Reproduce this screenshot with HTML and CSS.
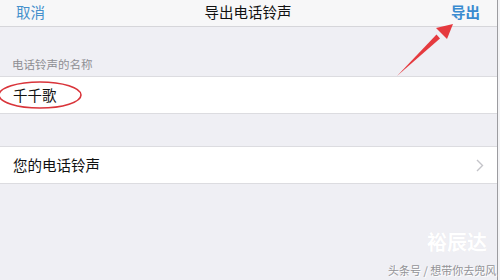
FILE: index.html
```html
<!DOCTYPE html>
<html lang="zh">
<head>
<meta charset="utf-8">
<link rel="stylesheet" href="styles.css">
</head>
<body>
<div class="app">
  <div class="nav">
    <span class="nav-btn">取消</span>
    <span class="nav-title">导出电话铃声</span>
    <span class="nav-btn nav-done">导出</span>
  </div>
  <div class="group-header">电话铃声的名称</div>
  <div class="row"><span class="row-text">千千歌</span></div>
  <div class="spacer"></div>
  <div class="row row-link">
    <span class="row-text">您的电话铃声</span>
    <svg class="chevron" width="8" height="13" viewBox="0 0 8 13"><path d="M1 1 L6.5 6.5 L1 12" fill="none" stroke="#c4c4c9" stroke-width="1.4"/></svg>
  </div>
  <svg class="annot" width="497" height="280" viewBox="0 0 497 280">
    <ellipse cx="40" cy="95" rx="41" ry="13" fill="none" stroke="#d9343a" stroke-width="1.6"/>
    <path d="M397 76 L440 38.5 L436.5 34.5 Z" fill="#e53a3f"/>
    <path d="M453 24 L436 28 L447 39 Z" fill="#e53a3f"/>
  </svg>
  <div class="wm-title">裕辰达</div>
  <div class="wm-sub">头条号 / 想带你去兜风</div>
</div>
</body>
</html>
```
FILE: styles.css
```css
* { box-sizing: border-box; margin: 0; padding: 0; }
html, body { width: 500px; height: 280px; overflow: hidden; background: #f4f4f6; }
body { font-family: "Noto Sans CJK SC", "Noto Sans", sans-serif; }
.app {
  position: relative;
  width: 498px;
  height: 280px;
  background: #efeff4;
  border-right: 1px solid #9c9ca0;
  display: flex;
  flex-direction: column;
}
.nav {
  height: 27px;
  background: #f7f7f8;
  border-bottom: 1px solid #d6d6da;
  display: grid;
  grid-template-columns: 1fr auto 1fr;
  align-items: center;
  padding: 0 17px 1px 16px;
}
.nav-btn { font-size: 14.5px; color: #4590cc; line-height: 1; }
.nav-title { font-size: 14.5px; color: #111; line-height: 1; }
.nav-done { justify-self: end; font-weight: 700; color: #3a8bd0; }
.group-header {
  height: 49px;
  display: flex;
  align-items: flex-end;
  padding: 0 0 6px 12px;
  font-size: 11.5px;
  color: #8e8e93;
  line-height: 1;
}
.row {
  height: 38px;
  background: #fff;
  border-top: 1px solid #dcdce0;
  border-bottom: 1px solid #dcdce0;
  display: flex;
  align-items: center;
  justify-content: space-between;
  padding: 0 13px 0 13px;
}
.row-text { font-size: 14.5px; color: #111; line-height: 1; }
.spacer { height: 32px; }
.chevron { margin-right: 0; }
.annot { position: absolute; left: 0; top: 0; pointer-events: none; }
.wm-title {
  position: absolute;
  left: 427px;
  top: 230px;
  font-size: 20px;
  font-weight: 700;
  color: #ffffff;
  line-height: 24px;
  text-shadow: 0 0 1px rgba(0,0,0,0.05);
}
.wm-sub {
  position: absolute;
  left: 388px;
  top: 263px;
  font-size: 11px;
  color: #939397;
  line-height: 14px;
  text-shadow: 1px 1px 0 #fff;
  white-space: nowrap;
}
```
